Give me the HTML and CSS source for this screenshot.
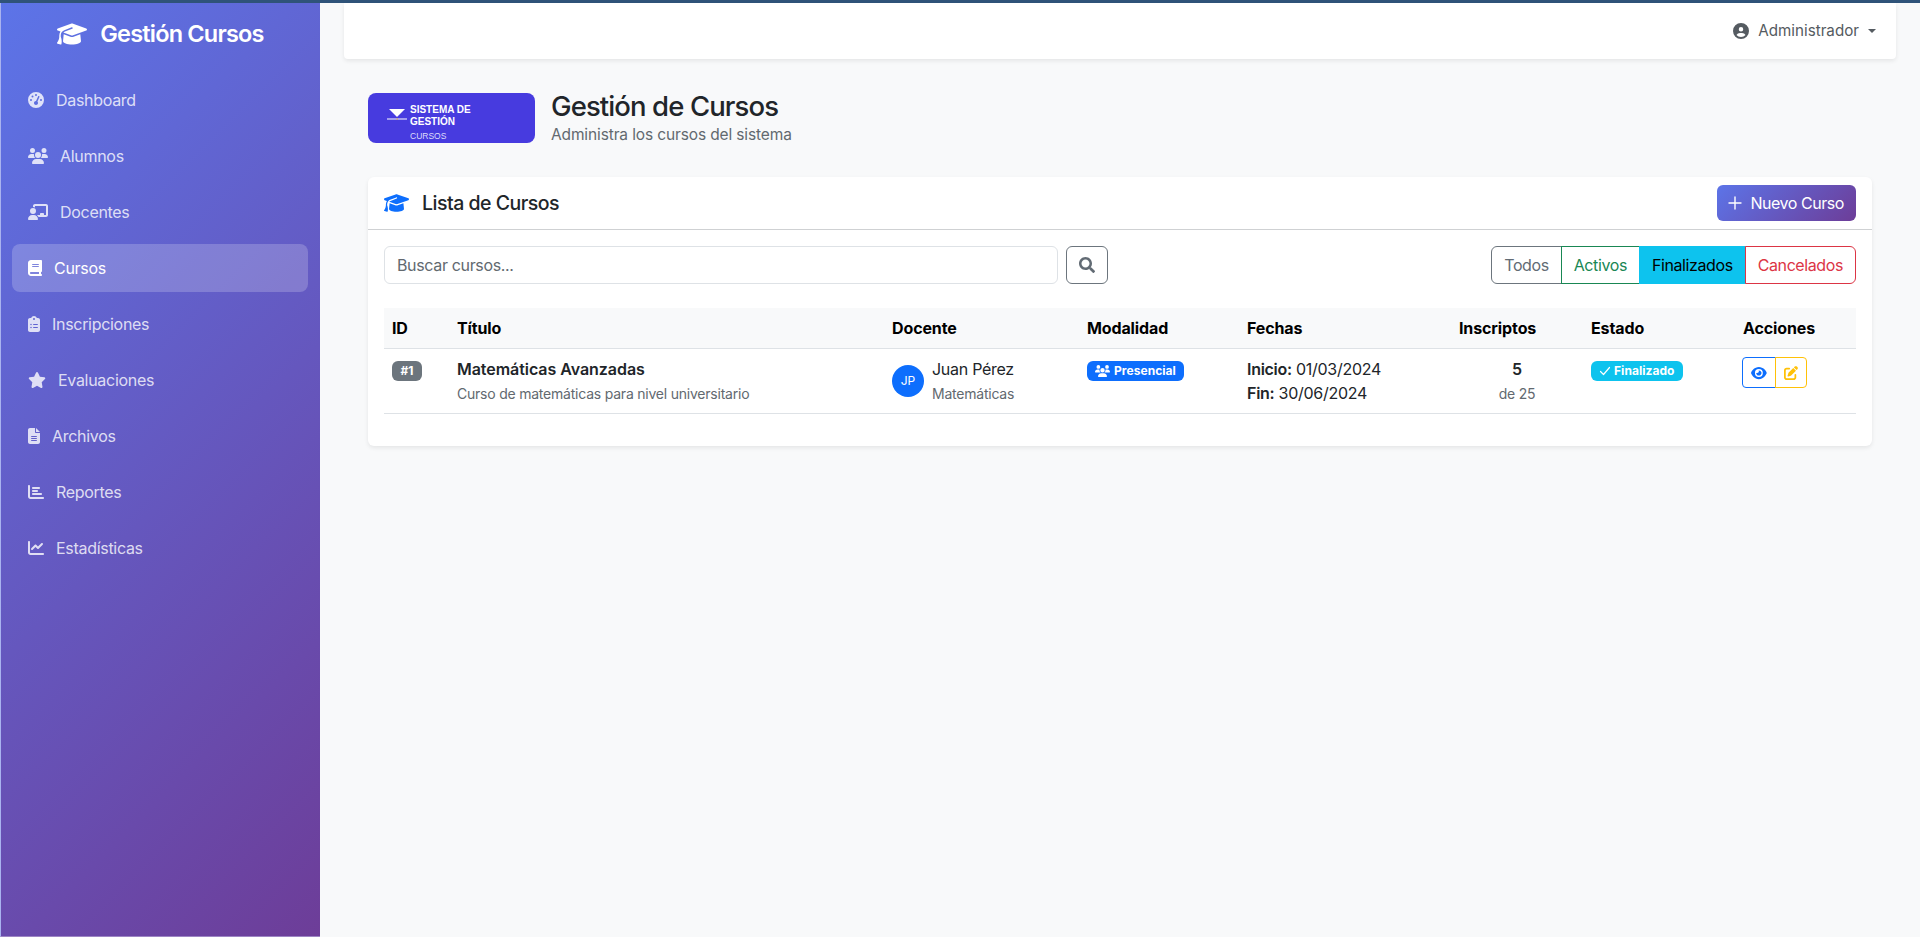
FILE: index.html
```html
<!DOCTYPE html>
<html lang="es">
<head>
    <meta charset="UTF-8">
    <meta name="viewport" content="width=device-width, initial-scale=1.0">
    <title>Gestión de Cursos</title>
    <link rel="stylesheet" href="styles.css">
</head>
<body>
    <div class="top-line"></div>
    <div class="layout">
        <aside class="sidebar">
            <h4 class="brand">
                <svg class="icon brand-icon" viewBox="0 0 640 512"><path d="M320 32c-8.1 0-16.1 1.4-23.7 4.1L15.8 137.4C6.3 140.9 0 149.9 0 160s6.3 19.1 15.8 22.6l57.9 20.9C57.3 229.3 48 259.8 48 291.9v28.1c0 28.4-10.8 57.7-22.3 80.8c-6.5 13-13.9 25.8-22.5 37.6C0 442.7-.9 448.3 .9 453.4s6 8.9 11.2 10.2l64 16c4.2 1.1 8.7 .3 12.4-2s6.3-6.1 7.1-10.4c8.6-42.8 4.3-81.2-2.1-108.7C90.3 344.3 86 329.8 80 316.5V291.9c0-30.2 10.2-58.7 27.9-81.5c12.9-15.5 29.6-28 49.2-35.7l157-61.7c8.2-3.2 17.5 .8 20.7 9s-.8 17.5-9 20.7l-157 61.7c-12.4 4.9-23.3 12.4-32.2 21.6l159.6 57.6c7.6 2.7 15.6 4.1 23.7 4.1s16.1-1.4 23.7-4.1L624.2 182.6c9.5-3.4 15.8-12.5 15.8-22.6s-6.3-19.1-15.8-22.6L343.7 36.1C336.1 33.4 328.1 32 320 32zM128 408c0 35.3 86 72 192 72s192-36.7 192-72L496.7 262.6 354.5 314c-11.1 4-22.8 6-34.5 6s-23.5-2-34.5-6L143.3 262.6 128 408z"/></svg>
                Gestión Cursos
            </h4>
            <nav>
                <ul class="nav-list">
                    <li><a href="#" class="nav-link">
                        <svg class="icon" viewBox="0 0 512 512"><path d="M0 256a256 256 0 1 1 512 0A256 256 0 1 1 0 256zM288 96a32 32 0 1 0 -64 0 32 32 0 1 0 64 0zM256 416c35.3 0 64-28.7 64-64c0-17.4-6.9-33.1-18.1-44.6L366 161.7c5.3-12.1-.2-26.3-12.3-31.6s-26.3 .2-31.6 12.3L257.9 288c-.6 0-1.3 0-1.9 0c-35.3 0-64 28.7-64 64s28.7 64 64 64zM176 144a32 32 0 1 0 -64 0 32 32 0 1 0 64 0zM96 288a32 32 0 1 0 0-64 32 32 0 1 0 0 64zm352-32a32 32 0 1 0 -64 0 32 32 0 1 0 64 0z"/></svg>
                        Dashboard</a></li>
                    <li><a href="#" class="nav-link">
                        <svg class="icon" viewBox="0 0 640 512"><path d="M144 0a80 80 0 1 1 0 160A80 80 0 1 1 144 0zM512 0a80 80 0 1 1 0 160A80 80 0 1 1 512 0zM0 298.7C0 239.8 47.8 192 106.7 192h42.7c15.9 0 31 3.5 44.6 9.7c-1.3 7.2-1.9 14.7-1.9 22.3c0 38.2 16.8 72.5 43.3 96c-.2 0-.4 0-.7 0H21.3C9.6 320 0 310.4 0 298.7zM405.3 320c-.2 0-.4 0-.7 0c26.6-23.5 43.3-57.8 43.3-96c0-7.6-.7-15-1.9-22.3c13.6-6.3 28.7-9.7 44.6-9.7h42.7C592.2 192 640 239.8 640 298.7c0 11.8-9.6 21.3-21.3 21.3H405.3zM224 224a96 96 0 1 1 192 0 96 96 0 1 1 -192 0zM128 485.3C128 411.7 187.7 352 261.3 352H378.7C452.3 352 512 411.7 512 485.3c0 14.7-11.9 26.7-26.7 26.7H154.7c-14.7 0-26.7-11.9-26.7-26.7z"/></svg>
                        Alumnos</a></li>
                    <li><a href="#" class="nav-link">
                        <svg class="icon" viewBox="0 0 640 512"><path d="M160 64c0-35.3 28.7-64 64-64H576c35.3 0 64 28.7 64 64V352c0 35.3-28.7 64-64 64H336.8c-11.8-25.5-29.9-47.5-52.4-64H384V320c0-17.7 14.3-32 32-32h64c17.7 0 32 14.3 32 32v32h64V64L224 64v49.1C205.2 102.2 183.3 96 160 96V64zm0 64a96 96 0 1 1 0 192 96 96 0 1 1 0-192zM133.3 352h53.3C260.3 352 320 411.7 320 485.3c0 14.7-11.9 26.7-26.7 26.7H26.7C11.9 512 0 500.1 0 485.3C0 411.7 59.7 352 133.3 352z"/></svg>
                        Docentes</a></li>
                    <li><a href="#" class="nav-link active">
                        <svg class="icon" viewBox="0 0 448 512"><path d="M96 0C43 0 0 43 0 96V416c0 53 43 96 96 96H384h32c17.7 0 32-14.3 32-32s-14.3-32-32-32V384c17.7 0 32-14.3 32-32V32c0-17.7-14.3-32-32-32H384 96zm0 384H352v64H96c-17.7 0-32-14.3-32-32s14.3-32 32-32zm32-240c0-8.8 7.2-16 16-16H336c8.8 0 16 7.2 16 16s-7.2 16-16 16H144c-8.8 0-16-7.2-16-16zm16 48H336c8.8 0 16 7.2 16 16s-7.2 16-16 16H144c-8.8 0-16-7.2-16-16s7.2-16 16-16z"/></svg>
                        Cursos</a></li>
                    <li><a href="#" class="nav-link">
                        <svg class="icon" viewBox="0 0 384 512"><path d="M192 0c-41.8 0-77.4 26.7-90.5 64H64C28.7 64 0 92.7 0 128V448c0 35.3 28.7 64 64 64H320c35.3 0 64-28.7 64-64V128c0-35.3-28.7-64-64-64H282.5C269.4 26.7 233.8 0 192 0zm0 64a32 32 0 1 1 0 64 32 32 0 1 1 0-64zM72 272a24 24 0 1 1 48 0 24 24 0 1 1 -48 0zm104-16H304c8.8 0 16 7.2 16 16s-7.2 16-16 16H176c-8.8 0-16-7.2-16-16s7.2-16 16-16zM72 368a24 24 0 1 1 48 0 24 24 0 1 1 -48 0zm88 0c0-8.8 7.2-16 16-16H304c8.8 0 16 7.2 16 16s-7.2 16-16 16H176c-8.8 0-16-7.2-16-16z"/></svg>
                        Inscripciones</a></li>
                    <li><a href="#" class="nav-link">
                        <svg class="icon" viewBox="0 0 576 512"><path d="M316.9 18C311.6 7 300.4 0 288.1 0s-23.4 7-28.8 18L195 150.3 51.4 171.5c-12 1.8-22 10.2-25.7 21.7s-.7 24.2 7.9 32.7L137.8 329 113.2 474.7c-2 12 3 24.2 12.9 31.3s23 8 33.8 2.3l128.3-68.5 128.3 68.5c10.8 5.7 23.9 4.9 33.8-2.3s14.9-19.3 12.9-31.3L438.5 329 542.7 225.9c8.6-8.5 11.7-21.2 7.9-32.7s-13.7-19.9-25.7-21.7L381.2 150.3 316.9 18z"/></svg>
                        Evaluaciones</a></li>
                    <li><a href="#" class="nav-link">
                        <svg class="icon" viewBox="0 0 384 512"><path d="M64 0C28.7 0 0 28.7 0 64V448c0 35.3 28.7 64 64 64H320c35.3 0 64-28.7 64-64V160H256c-17.7 0-32-14.3-32-32V0H64zM256 0V128H384L256 0zM112 256H272c8.8 0 16 7.2 16 16s-7.2 16-16 16H112c-8.8 0-16-7.2-16-16s7.2-16 16-16zm0 64H272c8.8 0 16 7.2 16 16s-7.2 16-16 16H112c-8.8 0-16-7.2-16-16s7.2-16 16-16zm0 64H272c8.8 0 16 7.2 16 16s-7.2 16-16 16H112c-8.8 0-16-7.2-16-16s7.2-16 16-16z"/></svg>
                        Archivos</a></li>
                    <li><a href="#" class="nav-link">
                        <svg class="icon" viewBox="0 0 512 512"><path d="M32 32c17.7 0 32 14.3 32 32V400c0 8.8 7.2 16 16 16H480c17.7 0 32 14.3 32 32s-14.3 32-32 32H80c-44.2 0-80-35.8-80-80V64C0 46.3 14.3 32 32 32zm96 96c0-17.7 14.3-32 32-32l192 0c17.7 0 32 14.3 32 32s-14.3 32-32 32l-192 0c-17.7 0-32-14.3-32-32zm32 64H288c17.7 0 32 14.3 32 32s-14.3 32-32 32H160c-17.7 0-32-14.3-32-32s14.3-32 32-32zm0 96H416c17.7 0 32 14.3 32 32s-14.3 32-32 32H160c-17.7 0-32-14.3-32-32s14.3-32 32-32z"/></svg>
                        Reportes</a></li>
                    <li><a href="#" class="nav-link">
                        <svg class="icon" viewBox="0 0 512 512"><path d="M64 64c0-17.7-14.3-32-32-32S0 46.3 0 64V400c0 44.2 35.8 80 80 80H480c17.7 0 32-14.3 32-32s-14.3-32-32-32H80c-8.8 0-16-7.2-16-16V64zm406.6 86.6c12.5-12.5 12.5-32.8 0-45.3s-32.8-12.5-45.3 0L320 210.7l-57.4-57.4c-12.5-12.5-32.8-12.5-45.3 0l-112 112c-12.5 12.5-12.5 32.8 0 45.3s32.8 12.5 45.3 0L240 221.3l57.4 57.4c12.5 12.5 32.8 12.5 45.3 0l128-128z"/></svg>
                        Estadísticas</a></li>
                </ul>
            </nav>
        </aside>

        <main class="main">
            <header class="topbar">
                <a href="#" class="user-menu">
                    <svg class="icon" viewBox="0 0 512 512"><path d="M399 384.2C376.9 345.8 335.4 320 288 320H224c-47.4 0-88.9 25.8-111 64.2c35.2 39.2 86.2 63.8 143 63.8s107.8-24.7 143-63.8zM0 256a256 256 0 1 1 512 0A256 256 0 1 1 0 256zm256 16a72 72 0 1 0 0-144 72 72 0 1 0 0 144z"/></svg>
                    Administrador
                    <span class="caret"></span>
                </a>
            </header>

            <div class="content">
                <div class="page-header">
                    <svg class="logo" viewBox="0 0 167 50">
                        <rect width="167" height="50" rx="8" fill="#473bdf"/>
                        <path d="M21 16h16l-8 8z" fill="#fff"/>
                        <rect x="19" y="25.5" width="20" height="1" fill="#fff"/>
                        <rect x="28.5" y="25.5" width="1.5" height="1" fill="#e0a030"/>
                        <text x="42" y="20" class="logo-title">SISTEMA DE</text>
                        <text x="42" y="32" class="logo-title">GESTIÓN</text>
                        <text x="42" y="46" class="logo-sub">CURSOS</text>
                    </svg>
                    <div>
                        <h1 class="page-title">Gestión de Cursos</h1>
                        <p class="page-sub">Administra los cursos del sistema</p>
                    </div>
                </div>

                <section class="card">
                    <div class="card-header">
                        <h2 class="card-title">
                            <svg class="icon cap-icon" viewBox="0 0 640 512"><path d="M320 32c-8.1 0-16.1 1.4-23.7 4.1L15.8 137.4C6.3 140.9 0 149.9 0 160s6.3 19.1 15.8 22.6l57.9 20.9C57.3 229.3 48 259.8 48 291.9v28.1c0 28.4-10.8 57.7-22.3 80.8c-6.5 13-13.9 25.8-22.5 37.6C0 442.7-.9 448.3 .9 453.4s6 8.9 11.2 10.2l64 16c4.2 1.1 8.7 .3 12.4-2s6.3-6.1 7.1-10.4c8.6-42.8 4.3-81.2-2.1-108.7C90.3 344.3 86 329.8 80 316.5V291.9c0-30.2 10.2-58.7 27.9-81.5c12.9-15.5 29.6-28 49.2-35.7l157-61.7c8.2-3.2 17.5 .8 20.7 9s-.8 17.5-9 20.7l-157 61.7c-12.4 4.9-23.3 12.4-32.2 21.6l159.6 57.6c7.6 2.7 15.6 4.1 23.7 4.1s16.1-1.4 23.7-4.1L624.2 182.6c9.5-3.4 15.8-12.5 15.8-22.6s-6.3-19.1-15.8-22.6L343.7 36.1C336.1 33.4 328.1 32 320 32zM128 408c0 35.3 86 72 192 72s192-36.7 192-72L496.7 262.6 354.5 314c-11.1 4-22.8 6-34.5 6s-23.5-2-34.5-6L143.3 262.6 128 408z"/></svg>
                            Lista de Cursos
                        </h2>
                        <button class="btn-new">
                            <svg class="plus-icon" viewBox="0 0 14 14"><path d="M7 1v12M1 7h12" stroke="#fff" stroke-width="1.4" stroke-linecap="round"/></svg>
                            Nuevo Curso
                        </button>
                    </div>

                    <div class="card-body">
                        <div class="toolbar">
                            <div class="search">
                                <input class="search-input" type="text" placeholder="Buscar cursos...">
                                <button class="search-btn">
                                    <svg class="icon" viewBox="0 0 512 512"><path d="M505 442.7L405.3 343c-4.5-4.5-10.6-7-17-7H372c27.6-35.3 44-79.7 44-128C416 93.1 322.9 0 208 0S0 93.1 0 208s93.1 208 208 208c48.3 0 92.7-16.4 128-44v16.3c0 6.4 2.5 12.5 7 17l99.7 99.7c9.4 9.4 24.6 9.4 33.9 0l28.3-28.3c9.4-9.4 9.4-24.6.1-34zM208 336c-70.7 0-128-57.2-128-128 0-70.7 57.2-128 128-128 70.7 0 128 57.2 128 128 0 70.7-57.2 128-128 128z"/></svg>
                                </button>
                            </div>
                            <div class="filters">
                                <button class="filter filter-all">Todos</button>
                                <button class="filter filter-active">Activos</button>
                                <button class="filter filter-done">Finalizados</button>
                                <button class="filter filter-cancel">Cancelados</button>
                            </div>
                        </div>

                        <table class="courses">
                            <colgroup>
                                <col class="col-id">
                                <col class="col-title">
                                <col class="col-teacher">
                                <col class="col-mode">
                                <col class="col-dates">
                                <col class="col-count">
                                <col class="col-status">
                                <col class="col-actions">
                            </colgroup>
                            <thead>
                                <tr>
                                    <th>ID</th>
                                    <th>Título</th>
                                    <th>Docente</th>
                                    <th>Modalidad</th>
                                    <th>Fechas</th>
                                    <th>Inscriptos</th>
                                    <th>Estado</th>
                                    <th>Acciones</th>
                                </tr>
                            </thead>
                            <tbody>
                                <tr>
                                    <td><span class="badge badge-id">#1</span></td>
                                    <td>
                                        <div class="course-name">Matemáticas Avanzadas</div>
                                        <small class="muted">Curso de matemáticas para nivel universitario</small>
                                    </td>
                                    <td>
                                        <div class="teacher">
                                            <span class="avatar">JP</span>
                                            <div>
                                                <div>Juan Pérez</div>
                                                <small class="muted">Matemáticas</small>
                                            </div>
                                        </div>
                                    </td>
                                    <td>
                                        <span class="badge badge-mode">
                                            <svg class="icon" viewBox="0 0 640 512"><path d="M144 0a80 80 0 1 1 0 160A80 80 0 1 1 144 0zM512 0a80 80 0 1 1 0 160A80 80 0 1 1 512 0zM0 298.7C0 239.8 47.8 192 106.7 192h42.7c15.9 0 31 3.5 44.6 9.7c-1.3 7.2-1.9 14.7-1.9 22.3c0 38.2 16.8 72.5 43.3 96c-.2 0-.4 0-.7 0H21.3C9.6 320 0 310.4 0 298.7zM405.3 320c-.2 0-.4 0-.7 0c26.6-23.5 43.3-57.8 43.3-96c0-7.6-.7-15-1.9-22.3c13.6-6.3 28.7-9.7 44.6-9.7h42.7C592.2 192 640 239.8 640 298.7c0 11.8-9.6 21.3-21.3 21.3H405.3zM224 224a96 96 0 1 1 192 0 96 96 0 1 1 -192 0zM128 485.3C128 411.7 187.7 352 261.3 352H378.7C452.3 352 512 411.7 512 485.3c0 14.7-11.9 26.7-26.7 26.7H154.7c-14.7 0-26.7-11.9-26.7-26.7z"/></svg>
                                            Presencial
                                        </span>
                                    </td>
                                    <td class="dates">
                                        <div><strong>Inicio:</strong> 01/03/2024</div>
                                        <div><strong>Fin:</strong> 30/06/2024</div>
                                    </td>
                                    <td class="count">
                                        <div class="count-num">5</div>
                                        <small class="muted">de 25</small>
                                    </td>
                                    <td>
                                        <span class="badge badge-status">
                                            <svg class="check-icon" viewBox="0 0 12 12"><path d="M1.5 6.5l3 3 6-7" fill="none" stroke="#fff" stroke-width="1.2" stroke-linecap="round" stroke-linejoin="round"/></svg>
                                            Finalizado
                                        </span>
                                    </td>
                                    <td>
                                        <div class="actions">
                                            <button class="action action-view">
                                                <svg class="icon" viewBox="0 0 576 512"><path d="M288 32c-80.8 0-145.5 36.8-192.6 80.6C48.6 156 17.3 208 2.5 243.7c-3.3 7.9-3.3 16.7 0 24.6C17.3 304 48.6 356 95.4 399.4C142.5 443.2 207.2 480 288 480s145.5-36.8 192.6-80.6c46.8-43.5 78.1-95.4 93-131.1c3.3-7.9 3.3-16.7 0-24.6c-14.9-35.7-46.2-87.7-93-131.1C433.5 68.8 368.8 32 288 32zM144 256a144 144 0 1 1 288 0 144 144 0 1 1 -288 0zm144-64c0 35.3-28.7 64-64 64c-7.1 0-13.9-1.2-20.3-3.3c-5.5-1.8-11.9 1.6-11.7 7.4c.3 6.9 1.3 13.8 3.2 20.7c13.7 51.2 66.4 81.6 117.6 67.9s81.6-66.4 67.9-117.6c-11.1-41.5-47.8-69.4-88.6-71.1c-5.8-.2-9.2 6.1-7.4 11.7c2.1 6.4 3.3 13.2 3.3 20.3z"/></svg>
                                            </button>
                                            <button class="action action-edit">
                                                <svg class="icon" viewBox="0 0 512 512"><path d="M471.6 21.7c-21.9-21.9-57.3-21.9-79.2 0L362.3 51.7l97.9 97.9 30.1-30.1c21.9-21.9 21.9-57.3 0-79.2L471.6 21.7zm-299.2 220c-6.1 6.1-10.8 13.6-13.5 21.9l-29.6 88.8c-2.9 8.6-.6 18.1 5.8 24.6s15.9 8.7 24.6 5.8l88.8-29.6c8.2-2.7 15.7-7.4 21.9-13.5L437.7 172.3 339.7 74.3 172.4 241.7zM96 64C43 64 0 107 0 160V416c0 53 43 96 96 96H352c53 0 96-43 96-96V320c0-17.7-14.3-32-32-32s-32 14.3-32 32v96c0 17.7-14.3 32-32 32H96c-17.7 0-32-14.3-32-32V160c0-17.7 14.3-32 32-32h96c17.7 0 32-14.3 32-32s-14.3-32-32-32H96z"/></svg>
                                            </button>
                                        </div>
                                    </td>
                                </tr>
                            </tbody>
                        </table>
                    </div>
                </section>
            </div>
        </main>
    </div>
</body>
</html>
```

FILE: styles.css
```css
* {
    box-sizing: border-box;
}

body {
    font-family: Inter, 'Liberation Sans', sans-serif;
    font-size: 16px;
    line-height: 1.5;
    color: #212529;
    margin: 0;
    background-color: #f8f9fa;
    min-height: 937px;
    display: flex;
    flex-direction: column;
}

.top-line {
    height: 3px;
    background-color: #2f5379;
}

.layout {
    flex: 1;
    display: flex;
}

.icon {
    height: 1em;
    fill: currentColor;
    flex-shrink: 0;
}

/* sidebar */
.sidebar {
    width: 320px;
    flex: 0 0 auto;
    border-left: 1px solid #a9b3ef;
    border-bottom: 1px solid #9d85c4;
    background: linear-gradient(135deg, #5c74e8 0%, #6d3d98 100%);
    color: white;
}

.brand {
    margin: 0;
    padding: 16px 0 28px;
    display: flex;
    justify-content: center;
    align-items: center;
    gap: 13px;
    font-size: 23.5px;
    font-weight: 600;
    line-height: 29px;
    letter-spacing: -0.8px;
}

.brand-icon {
    height: 24px;
}

.nav-list {
    list-style-type: none;
    margin: 0;
    padding: 0 12px 0 11px;
}

.nav-link {
    display: flex;
    align-items: center;
    gap: 12px;
    height: 48px;
    margin-bottom: 8px;
    padding: 0 16px;
    border-radius: 8px;
    color: rgba(255, 255, 255, 0.8);
    text-decoration: none;
    letter-spacing: -0.3px;
}

.nav-link.active {
    color: white;
    background-color: rgba(255, 255, 255, 0.2);
}

/* main */
.main {
    flex: 1;
    padding: 0 24px;
    min-width: 0;
}

.topbar {
    height: 56px;
    display: flex;
    justify-content: flex-end;
    align-items: center;
    padding: 0 20px;
    background-color: white;
    border-radius: 0 0 4px 4px;
    box-shadow: 0 2px 4px rgba(0, 0, 0, 0.08);
}

.user-menu {
    display: flex;
    align-items: center;
    gap: 9px;
    font-size: 15.2px;
    color: #555b61;
    text-decoration: none;
}

.user-menu .icon {
    height: 16px;
}

.caret {
    border-top: 4.8px solid currentColor;
    border-left: 4.8px solid transparent;
    border-right: 4.8px solid transparent;
}

.content {
    padding: 30px 24px 0;
}

.page-header {
    display: flex;
    align-items: center;
    gap: 16px;
    margin-bottom: 30px;
}

.logo {
    width: 167px;
    height: 50px;
}

.logo-title {
    font-family: 'Liberation Sans', sans-serif;
    font-size: 10px;
    font-weight: bold;
    fill: white;
}

.logo-sub {
    font-family: 'Liberation Sans', sans-serif;
    font-size: 8.5px;
    fill: #dedbfa;
}

.page-title {
    margin: 0;
    font-size: 27.5px;
    font-weight: 500;
    line-height: 34px;
    letter-spacing: -0.9px;
}

.page-sub {
    margin: 0;
    font-size: 15.5px;
    line-height: 24px;
    letter-spacing: -0.13px;
    color: #62696f;
}

/* card */
.card {
    background-color: white;
    border-radius: 6px;
    box-shadow: 0 2px 4px rgba(0, 0, 0, 0.08);
}

.card-header {
    display: flex;
    justify-content: space-between;
    align-items: center;
    padding: 8px 16px;
    border-bottom: 1px solid #cfd1d3;
}

.card-title {
    margin: 0;
    display: flex;
    align-items: center;
    gap: 13px;
    font-size: 19.5px;
    font-weight: 500;
    line-height: 24px;
    letter-spacing: -0.5px;
}

.cap-icon {
    height: 20px;
    color: #0d6efd;
}

.btn-new {
    display: flex;
    align-items: center;
    gap: 8px;
    height: 36px;
    padding: 0 12px 0 11px;
    border: none;
    border-radius: 6px;
    background: linear-gradient(135deg, #5c74e8 0%, #6d3d98 100%);
    color: white;
    font: inherit;
    letter-spacing: -0.45px;
}

.plus-icon {
    width: 14px;
    height: 14px;
}

.card-body {
    padding: 16px;
}

.toolbar {
    display: flex;
    justify-content: space-between;
    margin-bottom: 24px;
}

.search {
    display: flex;
    gap: 8px;
    width: 724px;
}

.search-input {
    flex: 1;
    height: 38px;
    padding: 6px 12px;
    border: 1px solid #dee2e6;
    border-radius: 6px;
    font: inherit;
    letter-spacing: -0.35px;
    color: #212529;
}

.search-input::placeholder {
    color: #62696f;
}

.search-btn {
    width: 42px;
    height: 38px;
    display: flex;
    justify-content: center;
    align-items: center;
    padding: 0;
    border: 1px solid #6c757d;
    border-radius: 6px;
    background-color: white;
    color: #626b74;
    font: inherit;
}

.filters {
    display: flex;
}

.filter {
    height: 38px;
    padding: 0 12px;
    background-color: white;
    border: 1px solid;
    font: inherit;
    letter-spacing: -0.4px;
    margin-left: -1px;
}

.filter-all {
    color: #626b74;
    border-color: #6c757d;
    border-radius: 6px 0 0 6px;
}

.filter-active {
    color: #198754;
    border-color: #198754;
}

.filter-done {
    color: black;
    background-color: #0dc3ee;
    border-color: #0dc3ee;
}

.filter-cancel {
    color: #dc3545;
    border-color: #dc3545;
    border-radius: 0 6px 6px 0;
}

/* table */
.courses {
    width: 100%;
    table-layout: fixed;
    border-collapse: collapse;
    margin-bottom: 16px;
    letter-spacing: -0.28px;
}

.col-id { width: 65px; }
.col-title { width: 435px; }
.col-teacher { width: 195px; }
.col-mode { width: 160px; }
.col-dates { width: 212px; }
.col-count { width: 132px; }
.col-status { width: 152px; }
.col-actions { width: 121px; }

.courses th {
    padding: 8px;
    text-align: left;
    font-weight: 700;
    color: black;
    background-color: #f8f9fa;
    border-bottom: 1px solid #dee2e6;
    letter-spacing: -0.12px;
}

.courses td {
    padding: 8px;
    vertical-align: top;
    border-bottom: 1px solid #dee2e6;
}

.muted {
    font-size: 14px;
    letter-spacing: -0.22px;
    color: #62696f;
}

.badge {
    display: inline-flex;
    align-items: center;
    gap: 4px;
    height: 20px;
    padding: 0 8px;
    border-radius: 6px;
    font-size: 12px;
    font-weight: 700;
    line-height: 1;
    letter-spacing: 0.05px;
    color: white;
    vertical-align: top;
    margin-top: 4px;
}

.badge-id {
    min-width: 30px;
    justify-content: center;
    background-color: #6c757d;
}

.badge-mode {
    background-color: #0d6efd;
}

.badge-status {
    gap: 3px;
    background-color: #0dc3ee;
}

.check-icon {
    width: 12px;
    height: 12px;
}

.teacher {
    display: flex;
    gap: 8px;
}

.avatar {
    flex-shrink: 0;
    width: 32px;
    height: 32px;
    margin-top: 8px;
    display: flex;
    justify-content: center;
    align-items: center;
    border-radius: 50%;
    background-color: #0d6efd;
    color: white;
    font-size: 12px;
    letter-spacing: 0;
}

.course-name {
    font-weight: 600;
    letter-spacing: -0.05px;
}

strong {
    font-weight: 600;
}

.count {
    text-align: center;
}

.count-num {
    font-weight: 600;
}

.actions {
    display: flex;
    margin-left: -1px;
}

.action {
    height: 31px;
    padding: 0 8px;
    display: flex;
    align-items: center;
    background-color: white;
    border: 1px solid;
    font-size: 14px;
}

.action-view {
    color: #0d6efd;
    border-color: #0d6efd;
    border-radius: 4px 0 0 4px;
}

.action-edit {
    color: #ffc107;
    border-color: #ffc107;
    border-radius: 0 4px 4px 0;
    margin-left: -1px;
}
```
